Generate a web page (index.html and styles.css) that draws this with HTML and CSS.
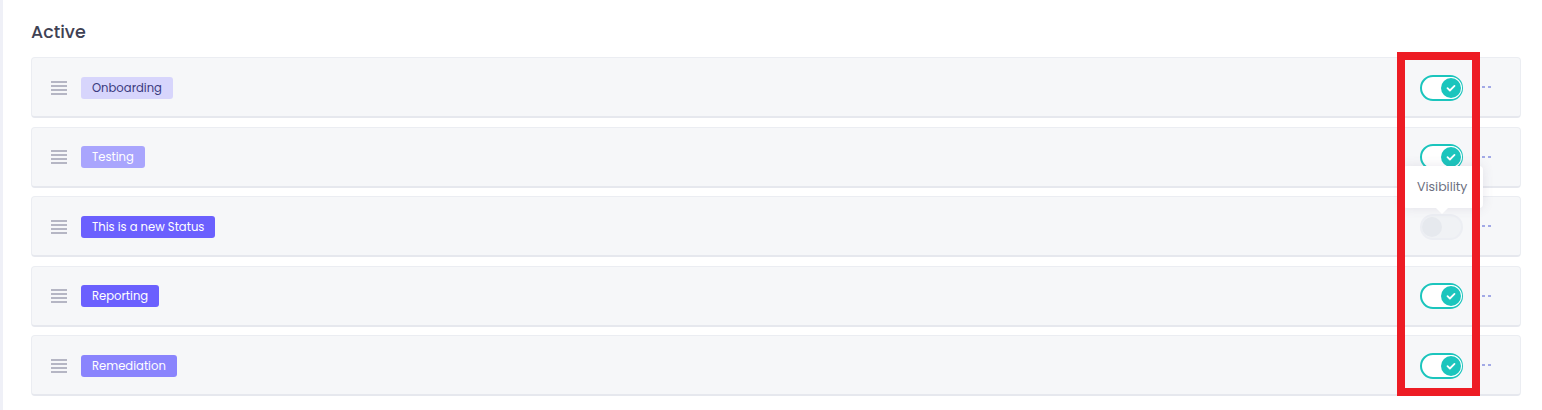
FILE: index.html
```html
<!DOCTYPE html>
<html lang="en">
<head>
  <meta charset="UTF-8">
  <title>Statuses</title>
  <link rel="stylesheet" href="styles.css">
</head>
<body>
  <div class="page">
    <h3 class="section-title">Active</h3>

    <!-- Status list -->
    <div class="status-list">
      <div class="status-row">
        <span class="handle"><i></i><i></i><i></i><i></i></span>
        <span class="badge badge-light">Onboarding</span>
        <span class="row-actions">
          <span class="switch on"><span class="knob"><svg viewBox="0 0 20 20"><path d="M6.5 10.2l2.4 2.3 4.6-4.6"/></svg></span></span>
          <span class="more"><i></i><i></i></span>
        </span>
      </div>
      <div class="status-row">
        <span class="handle"><i></i><i></i><i></i><i></i></span>
        <span class="badge badge-soft">Testing</span>
        <span class="row-actions">
          <span class="switch on"><span class="knob"><svg viewBox="0 0 20 20"><path d="M6.5 10.2l2.4 2.3 4.6-4.6"/></svg></span></span>
          <span class="more"><i></i><i></i></span>
        </span>
      </div>
      <div class="status-row">
        <span class="handle"><i></i><i></i><i></i><i></i></span>
        <span class="badge badge-strong">This is a new Status</span>
        <span class="row-actions">
          <span class="switch off"><span class="knob"></span></span>
          <span class="more"><i></i><i></i></span>
        </span>
      </div>
      <div class="status-row">
        <span class="handle"><i></i><i></i><i></i><i></i></span>
        <span class="badge badge-strong">Reporting</span>
        <span class="row-actions">
          <span class="switch on"><span class="knob"><svg viewBox="0 0 20 20"><path d="M6.5 10.2l2.4 2.3 4.6-4.6"/></svg></span></span>
          <span class="more"><i></i><i></i></span>
        </span>
      </div>
      <div class="status-row">
        <span class="handle"><i></i><i></i><i></i><i></i></span>
        <span class="badge badge-mid">Remediation</span>
        <span class="row-actions">
          <span class="switch on"><span class="knob"><svg viewBox="0 0 20 20"><path d="M6.5 10.2l2.4 2.3 4.6-4.6"/></svg></span></span>
          <span class="more"><i></i><i></i></span>
        </span>
      </div>
    </div>
  </div>

  <!-- Tooltip over the third switch -->
  <div class="tooltip">Visibility</div>

  <!-- Annotation box -->
  <div class="highlight"></div>
</body>
</html>
```

FILE: styles.css
```css
body {
  margin: 0;
  background: #fff;
  font-family: "Poppins", Inter, "Open Sans", sans-serif;
  color: #3f4254;
  position: relative;
  height: 410px;
  overflow: hidden;
}
.page {
  border-left: 3px solid #eff0f7;
  padding: 19px 21px 0 28px;
  height: 100%;
  box-sizing: border-box;
}
.section-title {
  margin: 0 0 11px;
  font-size: 17.5px;
  line-height: 27px;
  font-weight: 500;
  color: #3f4254;
}
.status-list {
  display: flex;
  flex-direction: column;
  gap: 8.5px;
}
.status-row {
  display: flex;
  align-items: center;
  height: 61px;
  box-sizing: border-box;
  padding: 0 29px 0 19px;
  background: #f6f7f9;
  border: 1px solid #ebedf2;
  border-bottom: 2px solid #e6e8ee;
  border-radius: 4px;
}
.handle {
  display: flex;
  flex-direction: column;
  gap: 2px;
  width: 16px;
  margin-right: 14px;
  margin-top: 1px;
}
.handle i {
  display: block;
  height: 2px;
  background: #b5b6c4;
}
.badge {
  font-size: 11.6px;
  line-height: 22px;
  height: 22px;
  padding: 0 11px;
  border-radius: 3px;
  color: #fff;
  margin-top: 1px;
}
.badge-light {
  background: #d7d5fc;
  color: #3b3a7e;
}
.badge-soft {
  background: #a9a5fd;
}
.badge-mid {
  background: #8a84fd;
}
.badge-strong {
  background: #6b60fe;
}
.row-actions {
  margin-left: auto;
  display: flex;
  align-items: center;
}
.switch {
  position: relative;
  width: 43px;
  height: 26px;
  box-sizing: border-box;
  border-radius: 13px;
  margin-top: 1px;
}
.switch.on {
  border: 2px solid #1bc5bd;
  background: #fff;
}
.switch.off {
  border: 2px solid #eceef3;
  background: #f0f2f5;
}
.switch .knob {
  position: absolute;
  top: 1px;
  width: 20px;
  height: 20px;
  border-radius: 50%;
}
.switch.on .knob {
  right: 0;
  background: #1bc5bd;
  box-shadow: 0 0 0 1px #fff;
}
.switch.off .knob {
  left: 0;
  background: #e6e9ee;
}
.knob svg {
  display: block;
  width: 20px;
  height: 20px;
  fill: none;
  stroke: #fff;
  stroke-width: 1.8;
  stroke-linecap: round;
  stroke-linejoin: round;
}
.more {
  display: flex;
  gap: 3px;
  margin-left: 19px;
}
.more i {
  display: block;
  width: 3px;
  height: 2px;
  background: #a2a9e6;
}
.tooltip {
  position: absolute;
  left: 1403px;
  top: 166px;
  width: 80px;
  height: 42px;
  box-sizing: border-box;
  padding-left: 14px;
  background: #fff;
  border-radius: 4px;
  box-shadow: 0 0 12px rgba(82, 63, 105, 0.12);
  font-size: 12.5px;
  line-height: 42px;
  color: #6c6f80;
}
.tooltip::after {
  content: "";
  position: absolute;
  left: 33px;
  bottom: -6px;
  border-left: 6px solid transparent;
  border-right: 6px solid transparent;
  border-top: 6px solid #fff;
}
.highlight {
  position: absolute;
  left: 1397px;
  top: 52px;
  width: 83px;
  height: 344px;
  box-sizing: border-box;
  border: 8px solid #ed1c24;
}
```
